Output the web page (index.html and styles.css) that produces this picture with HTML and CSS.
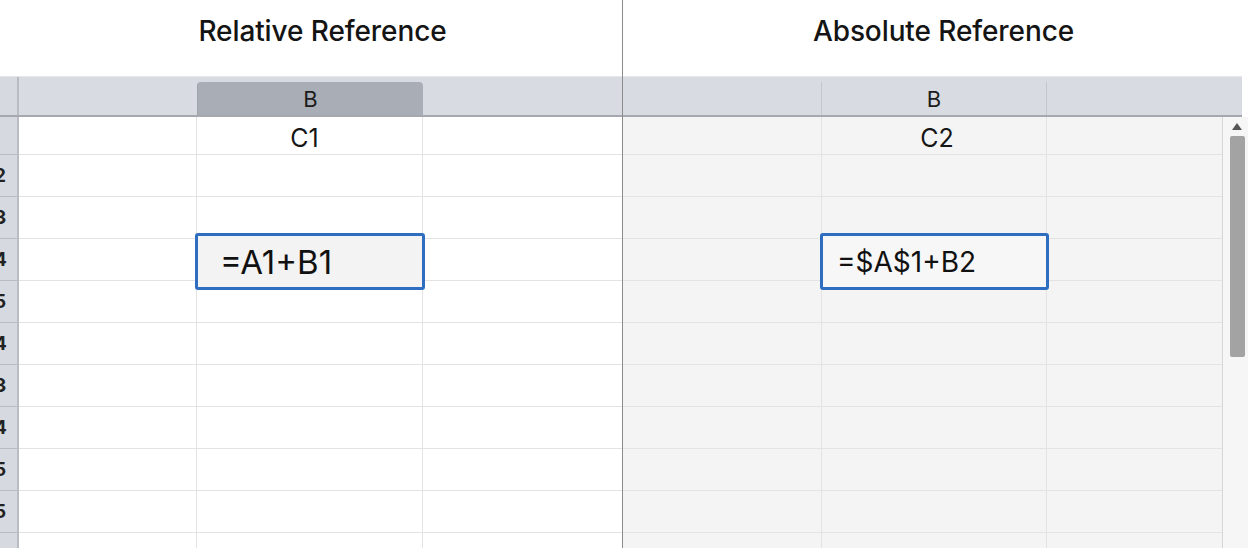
FILE: index.html
```html
<!DOCTYPE html>
<html>
<head>
<meta charset="utf-8">
<link rel="stylesheet" href="styles.css">
</head>
<body>
<div class="page">
  <section class="panel left">
    <h1 class="title">Relative Reference</h1>
    <div class="head">
      <div class="rh"></div>
      <div class="ch"></div>
      <div class="ch sel">B</div>
      <div class="ch last"></div>
    </div>
    <div class="grid">
      <div class="row first"><div class="rh"></div><div class="c"></div><div class="c b">C1</div><div class="c last"></div></div>
      <div class="row"><div class="rh"><span>2</span></div><div class="c"></div><div class="c"></div><div class="c last"></div></div>
      <div class="row"><div class="rh"><span>3</span></div><div class="c"></div><div class="c"></div><div class="c last"></div></div>
      <div class="row"><div class="rh"><span>4</span></div><div class="c"></div><div class="c"><div class="edit">=A1+B1</div></div><div class="c last"></div></div>
      <div class="row"><div class="rh"><span>5</span></div><div class="c"></div><div class="c"></div><div class="c last"></div></div>
      <div class="row"><div class="rh"><span>4</span></div><div class="c"></div><div class="c"></div><div class="c last"></div></div>
      <div class="row"><div class="rh"><span>3</span></div><div class="c"></div><div class="c"></div><div class="c last"></div></div>
      <div class="row"><div class="rh"><span>4</span></div><div class="c"></div><div class="c"></div><div class="c last"></div></div>
      <div class="row"><div class="rh"><span>5</span></div><div class="c"></div><div class="c"></div><div class="c last"></div></div>
      <div class="row"><div class="rh"><span>5</span></div><div class="c"></div><div class="c"></div><div class="c last"></div></div>
      <div class="row"><div class="rh"></div><div class="c"></div><div class="c"></div><div class="c last"></div></div>
    </div>
  </section>
  <section class="panel right">
    <h1 class="title">Absolute Reference</h1>
    <div class="head">
      <div class="ch"></div>
      <div class="ch">B</div>
      <div class="ch last"></div>
    </div>
    <div class="body">
      <div class="grid">
        <div class="row first"><div class="c"></div><div class="c b">C2</div><div class="c last"></div></div>
        <div class="row"><div class="c"></div><div class="c"></div><div class="c last"></div></div>
        <div class="row"><div class="c"></div><div class="c"></div><div class="c last"></div></div>
        <div class="row"><div class="c"></div><div class="c"><div class="edit abs">=$A$1+B2</div></div><div class="c last"></div></div>
        <div class="row"><div class="c"></div><div class="c"></div><div class="c last"></div></div>
        <div class="row"><div class="c"></div><div class="c"></div><div class="c last"></div></div>
        <div class="row"><div class="c"></div><div class="c"></div><div class="c last"></div></div>
        <div class="row"><div class="c"></div><div class="c"></div><div class="c last"></div></div>
        <div class="row"><div class="c"></div><div class="c"></div><div class="c last"></div></div>
        <div class="row"><div class="c"></div><div class="c"></div><div class="c last"></div></div>
        <div class="row"><div class="c"></div><div class="c"></div><div class="c last"></div></div>
      </div>
      <div class="scroll">
        <div class="arrow"></div>
        <div class="thumb"></div>
      </div>
    </div>
  </section>
</div>
</body>
</html>
```
FILE: styles.css
```css
* { box-sizing: border-box; }
html, body { margin: 0; padding: 0; }
body {
  width: 1248px;
  height: 548px;
  overflow: hidden;
  background: #ffffff;
  font-family: Inter, "Noto Sans", "Liberation Sans", sans-serif;
  color: #161616;
}
.page {
  display: flex;
  height: 548px;
}
.panel {
  display: flex;
  flex-direction: column;
  height: 548px;
  overflow: hidden;
}
.panel.left {
  width: 623px;
  flex-shrink: 0;
  border-right: 1px solid #8c8c8c;
}
.panel.right {
  flex: 1;
}
.title {
  flex-shrink: 0;
  margin: 0;
  height: 76px;
  display: flex;
  align-items: center;
  justify-content: center;
  font-size: 28px;
  font-weight: 500;
  letter-spacing: -0.1px;
  padding-bottom: 14px;
  color: #141414;
}
.left .title { padding-left: 23px; }
.right .title { padding-left: 16px; }

/* header row */
.head {
  flex-shrink: 0;
  height: 41px;
  display: grid;
  background: #d8dce2;
  border-top: 1px solid #e4e6ea;
  border-bottom: 2px solid #a5a8ae;
}
.left .head { grid-template-columns: 19px 178px 226px 1fr; }
.right .head {
  grid-template-columns: 199px 225px 1fr;
  margin-right: 6px;
}
.ch {
  display: flex;
  align-items: center;
  justify-content: center;
  font-size: 22px;
  padding-top: 6px;
  color: #1c1c1c;
}
.right .head .ch { border-right: 1px solid #c3c6cb; margin-top: 5px; padding-top: 0; }
.right .head .ch.last { border-right: none; }
.head .rh { border-right: 2px solid #b9bcc2; }
.ch.sel {
  margin-top: 5px;
  padding-top: 0;
  background: #a9adb5;
  border-radius: 4px 4px 0 0;
  border-left: 1px solid #9fa3aa;
}

/* grid rows */
.grid { flex: 1; }
.row {
  display: grid;
  height: 42px;
  border-bottom: 1px solid #e3e3e3;
}
.row.first { height: 38px; }
.left .row { grid-template-columns: 19px 178px 226px 1fr; }
.right .row { grid-template-columns: 199px 225px 1fr; }
.rh {
  background: #d6d9df;
  border-right: 2px solid #b9bcc2;
  overflow: hidden;
  position: relative;
}
.row .rh { border-bottom: 1px solid #b9bcc2; margin-bottom: -1px; }
.rh span {
  position: absolute;
  left: -6px;
  top: 9px;
  font-size: 19px;
  font-weight: 700;
  color: #222;
}
.c {
  border-right: 1px solid #e3e3e3;
  position: relative;
}
.c.last { border-right: none; }
.c.b {
  display: flex;
  align-items: center;
  justify-content: center;
  font-size: 25px;
  padding-top: 4px;
  padding-right: 10px;
}
.right .c.b { padding-right: 0; padding-left: 6px; }

.edit {
  position: absolute;
  left: -2px;
  right: -3px;
  top: -6px;
  bottom: -10px;
  border: 3px solid #2f6dc1;
  border-radius: 3px;
  background: #f3f3f3;
  font-size: 33px;
  display: flex;
  align-items: center;
  padding-left: 22px;
  padding-top: 1px;
  color: #111;
  z-index: 2;
}
.edit.abs { padding-left: 14px; background: #f7f7f7; font-size: 28px; }

/* right body */
.right .body {
  flex: 1;
  display: flex;
  background: #f4f4f4;
}
.right .grid { width: 599px; }
.scroll {
  width: 26px;
  border-left: 1px solid #d6d6d6;
  background: #f6f6f6;
  display: flex;
  flex-direction: column;
  align-items: center;
  padding-top: 6px;
  padding-left: 3px;
}
.arrow {
  width: 0;
  height: 0;
  border-left: 5px solid transparent;
  border-right: 5px solid transparent;
  border-bottom: 7px solid #555;
  margin-bottom: 6px;
}
.thumb {
  width: 15px;
  height: 221px;
  background: #a3a3a3;
  border-radius: 2px;
}
```
